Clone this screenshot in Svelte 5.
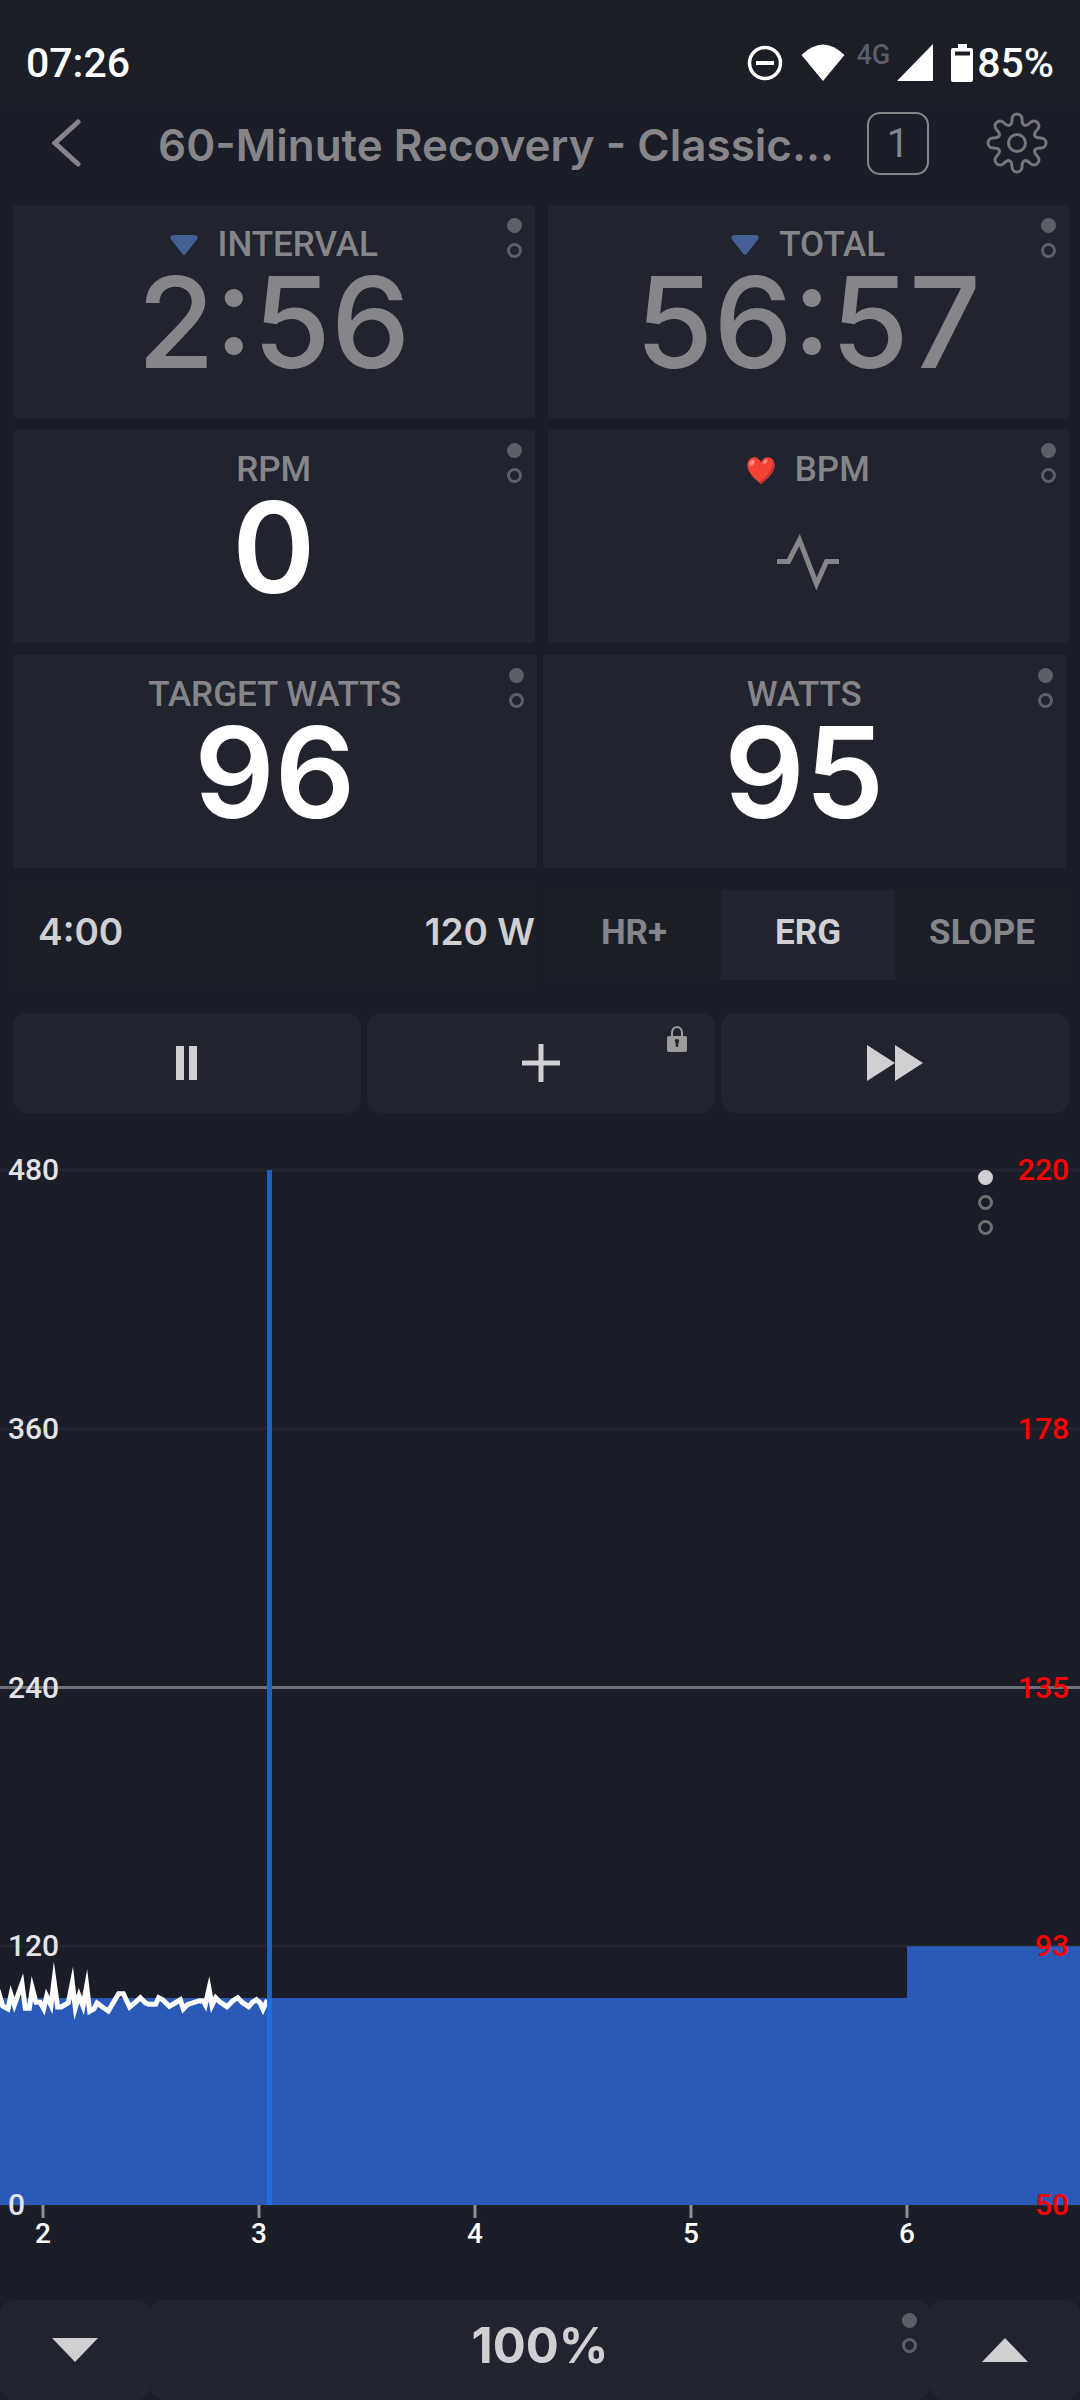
<script lang="ts">
	type Metric = {
		label: string;
		value?: string;
		icon?: 'countdown' | 'heart';
		muted?: boolean;
	};

	const metricRows: Metric[][] = [
		[
			{ label: 'INTERVAL', value: '2:56', icon: 'countdown', muted: true },
			{ label: 'TOTAL', value: '56:57', icon: 'countdown', muted: true }
		],
		[{ label: 'RPM', value: '0' }, { label: 'BPM', icon: 'heart' }],
		[
			{ label: 'TARGET WATTS', value: '96' },
			{ label: 'WATTS', value: '95' }
		]
	];

	const modes = ['HR+', 'ERG', 'SLOPE'];
	let mode = $state('ERG');
	let intensity = $state(100);

	// Chart geometry, in viewBox units
	const plot = { top: 30, bottom: 1065, width: 1080, minuteWidth: 216, firstMinuteX: 43 };
	const maxWatts = 480;

	const yFor = (watts: number) =>
		plot.bottom - (watts / maxWatts) * (plot.bottom - plot.top);
	const xFor = (minute: number) => plot.firstMinuteX + (minute - 2) * plot.minuteWidth;

	const gridLines = [
		{ watts: 480, bpm: 220 },
		{ watts: 360, bpm: 178 },
		{ watts: 240, bpm: 135, strong: true },
		{ watts: 120, bpm: 93 },
		{ watts: 0, bpm: 50 }
	];
	const minutes = [2, 3, 4, 5, 6];

	const targetPath = `M0 ${yFor(96)} H${xFor(6)} V${yFor(120)} H${plot.width} V${plot.bottom} H0 Z`;

	// Recorded power as [x, y] samples, three per chart unit
	const samples = [
		[-6, 270], [8, 318], [24, 327], [33, 284], [43, 315], [66, 251], [76, 325], [88, 325],
		[97, 265], [108, 307], [120, 307], [131, 326], [140, 288], [153, 316], [162, 242],
		[173, 321], [184, 321], [205, 308], [217, 248], [226, 324], [237, 287], [249, 318],
		[260, 258], [269, 334], [282, 327], [291, 309], [303, 318], [325, 333], [345, 299],
		[356, 281], [370, 281], [389, 321], [406, 307], [421, 293], [437, 309], [447, 313],
		[467, 313], [476, 293], [488, 299], [508, 319], [525, 309], [541, 299], [550, 327],
		[562, 314], [598, 302], [610, 303], [616, 314], [627, 266], [636, 316], [647, 293],
		[660, 306], [681, 320], [698, 303], [713, 293], [728, 308], [746, 320], [757, 307],
		[769, 299], [780, 308], [789, 328], [802, 300]
	];
	const powerLine = samples.map(([x, y]) => `${x / 3},${(760 + y / 3).toFixed(1)}`).join(' ');

	function buildGear() {
		let d = '';
		for (let i = 0; i < 8; i++) {
			const at = (x: number, y: number, step = i) => {
				const a = (step * Math.PI) / 4;
				const px = 31 + x * Math.cos(a) + y * Math.sin(a);
				const py = 31 + x * Math.sin(a) - y * Math.cos(a);
				return `${px.toFixed(2)} ${py.toFixed(2)}`;
			};
			d += i === 0 ? `M${at(-5, 24)}` : '';
			d += ` A5 5 0 0 1 ${at(5, 24)}`;
			d += ` C${at(5, 17)} ${at(-5, 17, i + 1)} ${at(-5, 24, i + 1)}`;
		}
		return d + 'Z';
	}
	const gearPath = buildGear();
</script>

{#snippet pager(count: number)}
	<div class="pager" aria-hidden="true">
		{#each Array(count) as _, i (i)}
			<span class:filled={i === 0}></span>
		{/each}
	</div>
{/snippet}

<div class="screen">
	<div class="status-bar">
		<span class="clock">07:26</span>
		<div class="status-icons">
			<svg class="dnd" width="36" height="36" viewBox="0 0 36 36" aria-hidden="true">
				<circle cx="18" cy="18" r="15.5" fill="none" stroke="#fff" stroke-width="3.5" />
				<path d="M9 18h18" stroke="#fff" stroke-width="4" />
			</svg>
			<svg class="wifi" width="44" height="37" viewBox="0 0 44 37" aria-hidden="true">
				<path d="M0.500 11 Q22 -10 43.500 11 L22 37Z" fill="#fff" />
			</svg>
			<span class="network">4G</span>
			<svg class="signal" width="36" height="37" viewBox="0 0 36 37" aria-hidden="true">
				<path d="M0 37 L36 0 V37Z" fill="#fff" />
			</svg>
			<svg class="battery" width="22" height="38" viewBox="0 0 22 38" aria-hidden="true">
				<path
					fill-rule="evenodd"
					d="M7 0h9v4h4q2 0 2 2v30q0 2-2 2H2q-2 0-2-2V6q0-2 2-2h5Z M4 7.500v4h15v-4Z"
					fill="#fff"
				/>
			</svg>
			<span class="charge">85%</span>
		</div>
	</div>

	<header>
		<button type="button" class="icon-btn" aria-label="Back">
			<svg width="30" height="48" viewBox="0 0 30 48">
				<path d="M26 3 L3 24 L26 45" fill="none" stroke="#86868a" stroke-width="5" stroke-linecap="round" />
			</svg>
		</button>
		<h1>60-Minute Recovery - Classic...</h1>
		<button type="button" class="screen-number">1</button>
		<button type="button" class="icon-btn" aria-label="Settings">
			<svg width="62" height="62" viewBox="0 0 62 62" fill="none" stroke="#77777a" stroke-width="3">
				<path d={gearPath} />
				<circle cx="31" cy="31" r="8.500" />
			</svg>
		</button>
	</header>

	<main>
		<div class="metrics">
			{#each metricRows as row, r (r)}
				<div class="metric-row" class:tight={r === 2}>
					{#each row as metric (metric.label)}
						<section class="card" class:muted={metric.muted}>
							<h2>
								{#if metric.icon === 'countdown'}
									<svg width="28" height="20" viewBox="0 0 28 20" aria-hidden="true">
										<path d="M3 0H25Q29 1 27 4.500L16 18.500Q14 21 12 18.500L1 4.500Q-1 1 3 0Z" fill="#456095" />
									</svg>
								{:else if metric.icon === 'heart'}
									<svg width="28" height="27" viewBox="0 0 28 27" aria-hidden="true">
										<path d="M14 5C11-1 5-1 2 3C-2 9 1 17 14 27C27 17 30 9 26 3C23-1 17-1 14 5Z" fill="#f44336" />
										<path d="M25 2.500C27 9 23 17 12 25.500L14 27C27 17 30 9 25 2.500Z" fill="#c33a35" />
										<ellipse cx="5" cy="6" rx="2" ry="3.500" transform="rotate(35 5 6)" fill="#ff8a80" />
										<ellipse cx="18.500" cy="4.500" rx="1.500" ry="3" transform="rotate(40 18.500 4.500)" fill="#ff8a80" />
									</svg>
								{/if}
								{metric.label}
							</h2>
							{#if metric.value}
								<p class="value">{metric.value}</p>
							{:else}
								<p class="value">
									<svg width="62" height="58" viewBox="0 0 62 58" role="img" aria-label="No signal">
										<path
											d="M0 28.500H11.500L22.500 7L39.500 51L49.500 28.500H62"
											fill="none"
											stroke="#86868a"
											stroke-width="5"
											stroke-miterlimit="10"
										/>
									</svg>
								</p>
							{/if}
							{@render pager(2)}
						</section>
					{/each}
				</div>
			{/each}
		</div>

		<div class="info-row">
			<div class="next-step">
				<span>4:00</span>
				<span>120 W</span>
			</div>
			<div class="modes">
				{#each modes as name (name)}
					<button
						type="button"
						class:active={mode === name}
						aria-pressed={mode === name}
						onclick={() => (mode = name)}
					>
						{name}
					</button>
				{/each}
			</div>
		</div>

		<div class="controls">
			<button type="button" aria-label="Pause">
				<svg width="22" height="34" viewBox="0 0 22 34" fill="#d0d0d3">
					<path d="M0 0h8v34H0z M13 0h8v34h-8z" />
				</svg>
			</button>
			<button type="button" aria-label="Add interval">
				<svg width="38" height="38" viewBox="0 0 38 38" stroke="#d0d0d3" stroke-width="5">
					<path d="M19 0v38M0 19h38" />
				</svg>
				<svg class="lock" width="20" height="26" viewBox="0 0 20 26">
					<path d="M5 11V6.500a5 5.500 0 0 1 10 0V11" fill="none" stroke="#9b9b9b" stroke-width="2" />
					<rect y="10" width="20" height="16" rx="2" fill="#9b9b9b" />
					<path d="M10 13a2 2 0 0 1 1.500 3.500L11 21H9L8.500 16.500A2 2 0 0 1 10 13Z" fill="#21232f" />
				</svg>
			</button>
			<button type="button" aria-label="Skip interval">
				<svg width="56" height="36" viewBox="0 0 56 36" fill="#d0d0d3">
					<path d="M0 0L28 18L0 36Z M28 0L56 18L28 36Z" />
				</svg>
			</button>
		</div>
	</main>

	<div class="chart">
		<svg viewBox="0 0 1080 1120" role="img" aria-label="Workout power chart">
			{#each gridLines as line (line.watts)}
				<line
					class="grid"
					class:strong={line.strong}
					x1="0"
					x2={plot.width}
					y1={yFor(line.watts)}
					y2={yFor(line.watts)}
				/>
			{/each}
			<path class="target" d={targetPath} />
			<polyline class="power" points={powerLine} />
			<rect class="cursor" x="267" y={plot.top} width="5" height={yFor(96) - plot.top} />
			<rect class="cursor over" x="267" y={yFor(96)} width="5" height={plot.bottom - yFor(96)} />

			{#each gridLines as line (line.watts)}
				<text class="watts" x="8" y={yFor(line.watts) + 10}>{line.watts}</text>
				<text class="bpm" x="1069" y={yFor(line.watts) + 10}>{line.bpm}</text>
			{/each}
			{#each minutes as minute (minute)}
				<line class="tick" x1={xFor(minute)} x2={xFor(minute)} y1={plot.bottom} y2={plot.bottom + 13} />
				<text class="minute" x={xFor(minute)} y={plot.bottom + 38}>{minute}</text>
			{/each}
		</svg>
		{@render pager(3)}
	</div>

	<footer>
		<button type="button" aria-label="Decrease intensity" onclick={() => (intensity -= 1)}>
			<svg width="46" height="24" viewBox="0 0 46 24"><path d="M0 0H46L23 24Z" fill="#d0d0d3" /></svg>
		</button>
		<div class="intensity">
			<output>{intensity}%</output>
			{@render pager(2)}
		</div>
		<button type="button" aria-label="Increase intensity" onclick={() => (intensity += 1)}>
			<svg width="46" height="24" viewBox="0 0 46 24"><path d="M0 24H46L23 0Z" fill="#d0d0d3" /></svg>
		</button>
	</footer>
</div>

<style>
	:global(body) {
		background: #1a1c27;
	}

	.screen {
		--panel: #21232f;
		--panel-dark: #1b1e26;
		--muted: #86868a;
		--light: #d0d0d3;
		background: #1a1c27;
		color: var(--light);
		font-family: Roboto, 'Liberation Sans', sans-serif;
		font-weight: 500;
	}

	svg {
		display: block;
		flex: none;
	}

	button {
		display: flex;
		align-items: center;
		justify-content: center;
		margin: 0;
		padding: 0;
		border: 0;
		background: none;
		color: inherit;
		font: inherit;
		cursor: pointer;
	}

	h1,
	h2,
	p {
		margin: 0;
		font-weight: inherit;
	}

	.status-bar {
		display: flex;
		align-items: center;
		justify-content: space-between;
		height: 105px;
		padding: 20px 26px 0 26px;
		box-sizing: border-box;
		background: var(--panel-dark);
		color: #fff;
		font-size: 41px;
		line-height: 48px;
	}

	.status-icons {
		display: flex;
		align-items: center;
	}

	.wifi {
		margin-left: 18px;
	}

	.network {
		margin: 0 7px 16px 11px;
		color: #5b5d66;
		font-size: 27px;
		line-height: 30px;
	}

	.battery {
		margin: 0 4px 0 18px;
	}

	header {
		display: flex;
		align-items: center;
		height: 76px;
		padding: 0 32px 24px 52px;
	}

	h1 {
		flex: 1;
		min-width: 0;
		margin-left: 76px;
		padding-top: 3px;
		overflow: hidden;
		color: var(--muted);
		font-family: Inter, Roboto, sans-serif;
		font-size: 44px;
		font-weight: 600;
		line-height: 60px;
		white-space: nowrap;
	}

	.screen-number {
		width: 62px;
		height: 63px;
		margin: 0 57px 0 24px;
		border: 2px solid var(--muted);
		border-radius: 13px;
		color: var(--muted);
		font-size: 40px;
		font-weight: 400;
	}

	main {
		padding: 0 11px 0 13px;
	}

	.metrics {
		display: grid;
		gap: 12px;
	}

	.metric-row {
		display: grid;
		grid-template-columns: 1fr 1fr;
		gap: 13px;
	}

	.metric-row.tight {
		gap: 6px;
		padding-right: 3px;
	}

	.card {
		position: relative;
		height: 213px;
		padding-top: 20px;
		box-sizing: border-box;
		border-radius: 3px;
		background: var(--panel);
		color: #fff;
		text-align: center;
	}

	.card.muted {
		color: var(--muted);
	}

	h2 {
		display: flex;
		align-items: center;
		justify-content: center;
		gap: 20px;
		color: var(--muted);
		font-size: 35px;
		line-height: 40px;
	}

	.value {
		display: flex;
		align-items: center;
		justify-content: center;
		height: 114px;
		font-family: Inter, Roboto, sans-serif;
		font-size: 126px;
		font-weight: 600;
		line-height: 114px;
	}

	.muted .value {
		font-weight: 500;
	}

	.value svg {
		margin-top: 30px;
	}

	.pager {
		position: absolute;
		top: 13px;
		right: 13px;
		display: grid;
		gap: 10px;
	}

	.pager span {
		width: 15px;
		height: 15px;
		box-sizing: border-box;
		border: 3px solid #5d5f68;
		border-radius: 50%;
	}

	.pager .filled {
		background: #5d5f68;
	}

	.info-row {
		display: grid;
		grid-template-columns: 1fr 1fr;
		gap: 12px;
		align-items: center;
		margin-top: 17px;
	}

	.next-step {
		display: flex;
		align-items: center;
		justify-content: space-between;
		height: 100px;
		padding: 0 0 8px 25px;
		box-sizing: border-box;
		background: var(--panel-dark);
		font-family: Inter, Roboto, sans-serif;
		font-size: 37px;
		font-weight: 600;
	}

	.modes {
		display: grid;
		grid-template-columns: 1fr 1fr 1fr;
		height: 90px;
		background: var(--panel-dark);
	}

	.modes button {
		padding-bottom: 6px;
		color: var(--muted);
		font-size: 35px;
		font-weight: 700;
	}

	.modes .active {
		background: var(--panel);
		color: var(--light);
	}

	.controls {
		display: grid;
		grid-template-columns: 1fr 1fr 1fr;
		gap: 6px;
		margin-top: 28px;
	}

	.controls button {
		position: relative;
		height: 100px;
		border-radius: 14px;
		background: var(--panel);
	}

	.lock {
		position: absolute;
		top: 13px;
		right: 28px;
	}

	.chart {
		position: relative;
		margin-top: 27px;
	}

	.chart > svg {
		width: 100%;
		height: auto;
	}

	.grid {
		stroke: #23252e;
		stroke-width: 3;
	}

	.grid.strong {
		stroke: #6f7076;
	}

	.target {
		fill: #2a59b8;
	}

	.power {
		fill: none;
		stroke: #fff;
		stroke-width: 5;
		stroke-miterlimit: 20;
	}

	.cursor {
		fill: #1e60ba;
	}

	.cursor.over {
		fill: #1e6ee0;
	}

	.tick {
		stroke: #8d8e94;
		stroke-width: 3;
	}

	.watts {
		fill: #e3e3e5;
		font-size: 30px;
	}

	.bpm {
		fill: #f00;
		font-size: 30px;
		text-anchor: end;
	}

	.minute {
		fill: #fff;
		font-size: 28px;
		text-anchor: middle;
	}

	.chart .pager {
		top: 30px;
		right: 87px;
	}

	.chart .pager span {
		border-color: #6f6f6f;
	}

	.chart .pager .filled {
		border-color: var(--light);
		background: var(--light);
	}

	footer {
		display: grid;
		grid-template-columns: 150px 1fr 150px;
		height: 100px;
		margin-top: 40px;
	}

	footer > * {
		border-radius: 14px;
		background: var(--panel);
	}

	.intensity {
		position: relative;
		display: flex;
		align-items: center;
		justify-content: center;
		padding-bottom: 10px;
		font-family: Inter, Roboto, sans-serif;
		font-size: 49px;
		font-weight: 700;
	}
</style>
